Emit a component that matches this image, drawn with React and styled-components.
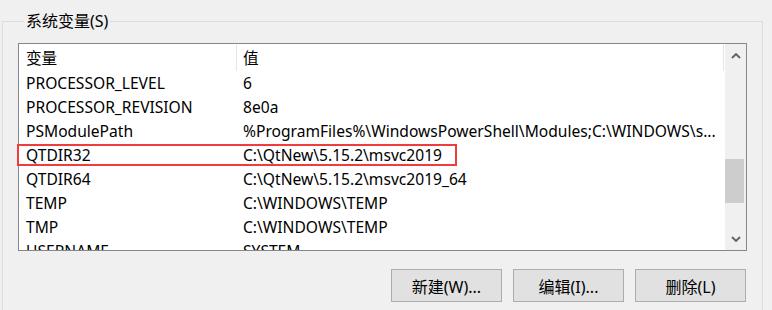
import React from "react";
import styled, { createGlobalStyle } from "styled-components";

const Global = createGlobalStyle`
  html, body { margin: 0; padding: 0; background: #f0f0f0; }
  body {
    font-family: "Noto Sans", "Noto Sans CJK SC", sans-serif;
    font-size: 15.6px;
    color: #000;
  }
`;

const Page = styled.div`
  width: 772px;
  height: 310px;
  overflow: hidden;
  background: #f0f0f0;
  padding-left: 2px;
  box-sizing: border-box;
`;

const GroupBox = styled.fieldset`
  margin: 11px 0 0 0;
  width: 761px;
  height: 320px;
  box-sizing: border-box;
  border: 1px solid #dcdcdc;
  padding: 12px 0 0 15px;
  min-width: 0;
`;

const Legend = styled.legend`
  margin-left: 6px;
  padding: 0 2px;
  line-height: 20px;
  font-size: 16px;
`;

const ListFrame = styled.div`
  position: relative;
  width: 729px;
  height: 208px;
  box-sizing: border-box;
  border: 1px solid #828790;
  background: #fff;
`;

const ListInner = styled.div`
  display: flex;
  height: 100%;
  overflow: hidden;
`;

const Table = styled.div`
  width: 706px;
  overflow: hidden;
`;

const HeaderRow = styled.div`
  display: flex;
  height: 27px;
  align-items: stretch;
`;

const HeaderCell = styled.div`
  width: ${(p) => p.$w}px;
  box-sizing: border-box;
  padding-left: ${(p) => p.$pad}px;
  display: flex;
  align-items: center;
  position: relative;
  &::after {
    content: "";
    position: absolute;
    right: 0;
    top: 1px;
    bottom: 0;
    width: 1px;
    background: #e5e5e5;
  }
`;

const Row = styled.div`
  display: flex;
  height: 24px;
  align-items: center;
`;

const Cell = styled.div`
  width: ${(p) => p.$w}px;
  box-sizing: border-box;
  padding-left: ${(p) => p.$pad}px;
  white-space: nowrap;
  overflow: hidden;
`;

const ScrollBar = styled.div`
  width: 21px;
  background: #f0f0f0;
  display: flex;
  flex-direction: column;
`;

const ArrowButton = styled.div`
  height: 23px;
  display: flex;
  align-items: center;
  justify-content: center;
  flex: none;
`;

const Track = styled.div`
  flex: 1;
  position: relative;
`;

const Thumb = styled.div`
  position: absolute;
  left: 0;
  width: 19px;
  background: #cdcdcd;
`;

const Highlight = styled.div`
  position: absolute;
  left: -2px;
  top: 100px;
  width: 440px;
  height: 22px;
  box-sizing: border-box;
  border: 2px solid #f03c3c;
  pointer-events: none;
`;

const ButtonRow = styled.div`
  display: flex;
  justify-content: flex-end;
  gap: 11px;
  width: 728px;
  margin-top: 18px;
`;

const Button = styled.button`
  width: 111px;
  height: 33px;
  box-sizing: border-box;
  border: 1px solid #adadad;
  background: #e1e1e1;
  font-family: inherit;
  font-size: 16px;
  color: #000;
  padding: 0;
  cursor: default;
`;

const Chevron = ({ up }) => (
  <svg width="10" height="6" viewBox="0 0 10 6">
    <path
      d={up ? "M1 5 L5 1 L9 5" : "M1 1 L5 5 L9 1"}
      fill="none"
      stroke="#606060"
      strokeWidth="1.8"
    />
  </svg>
);

const rows = [
  ["PROCESSOR_LEVEL", "6"],
  ["PROCESSOR_REVISION", "8e0a"],
  ["PSModulePath", "%ProgramFiles%\\WindowsPowerShell\\Modules;C:\\WINDOWS\\s..."],
  ["QTDIR32", "C:\\QtNew\\5.15.2\\msvc2019"],
  ["QTDIR64", "C:\\QtNew\\5.15.2\\msvc2019_64"],
  ["TEMP", "C:\\WINDOWS\\TEMP"],
  ["TMP", "C:\\WINDOWS\\TEMP"],
  ["USERNAME", "SYSTEM"],
];

export default function App() {
  return (
    <>
      <Global />
      <Page>
        <GroupBox>
          <Legend>系统变量(S)</Legend>
          <ListFrame>
            <ListInner>
              <Table>
                <HeaderRow>
                  <HeaderCell $w={218} $pad={7}>变量</HeaderCell>
                  <HeaderCell $w={487} $pad={6}>值</HeaderCell>
                </HeaderRow>
                {rows.map(([k, v]) => (
                  <Row key={k}>
                    <Cell $w={218} $pad={7}>{k}</Cell>
                    <Cell $w={487} $pad={6}>{v}</Cell>
                  </Row>
                ))}
              </Table>
              <ScrollBar>
                <ArrowButton><Chevron up /></ArrowButton>
                <Track>
                  <Thumb style={{ top: 92, height: 44 }} />
                </Track>
                <ArrowButton><Chevron /></ArrowButton>
              </ScrollBar>
            </ListInner>
            <Highlight />
          </ListFrame>
          <ButtonRow>
            <Button>新建(W)...</Button>
            <Button>编辑(I)...</Button>
            <Button>删除(L)</Button>
          </ButtonRow>
        </GroupBox>
      </Page>
    </>
  );
}
